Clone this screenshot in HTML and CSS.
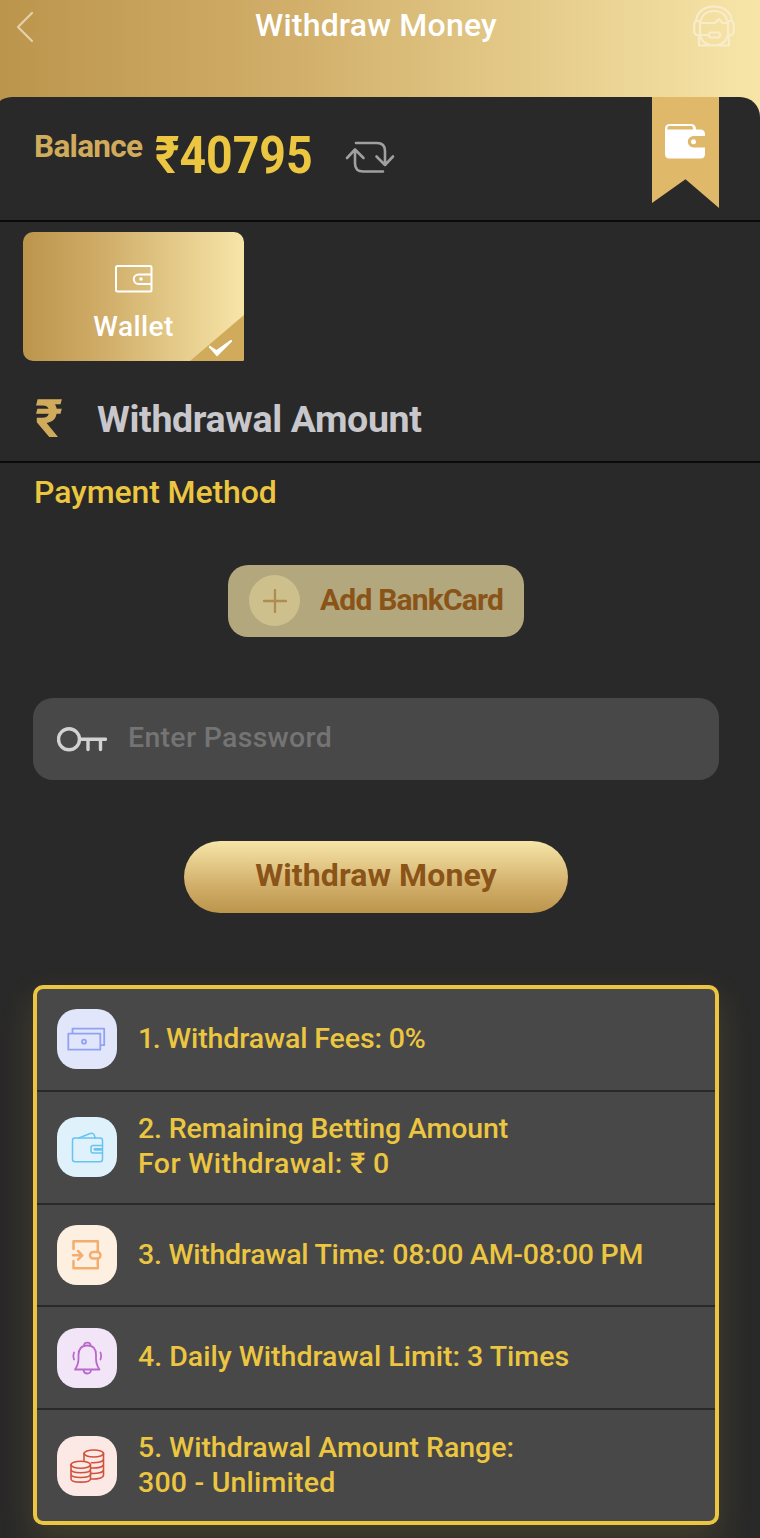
FILE: index.html
```html
<!DOCTYPE html>
<html lang="en">
<head>
<meta charset="utf-8">
<title>Withdraw Money</title>
<link rel="stylesheet" href="styles.css">
</head>
<body>
<header class="topbar">
  <svg class="back" viewBox="0 0 18 32"><path d="M16 2 2 16l14 14"/></svg>
  <h1 class="title">Withdraw Money</h1>
  <svg class="support" viewBox="0 0 42 42"><path d="M3 16C4 7 11 1.500 21 1.500S38 7 39 16M7.500 16C9 10 14 6 21 6s12 4 13.500 10M7 18h15l4-4 3.500 4H35M7 16v14h-2.500C2 30 1.200 28.500 1.200 26v-6C1.200 18 2 16 4 16zM35 16v14h2.500c2.500 0 3.300-1.500 3.300-4v-6c0-2-.8-4-2.800-4zM7 28c0 7 6 12.500 14 12.500S35 35 35 28M6 30v10.500h30V30M7 30h9M18 27.500h7q2 0 2 2v1q0 2-2 2h-7q-2 0-2-2v-1q0-2 2-2z"/></svg>
</header>
<main class="panel">
  <section class="balance">
    <span class="balance-label">Balance</span>
    <span class="balance-value">₹40795</span>
    <svg class="refresh" viewBox="0 0 50 34"><path d="M11 3h21q8 0 8 8v14M31.500 16.500 40 25l8-8.500M38 31.500H18q-8 0-8-8V9.500M2 18l8-8.500 8.500 8.500"/></svg>
    <div class="ribbon">
      <svg viewBox="0 0 40 35"><path fill-rule="evenodd" d="M5 0h21q5 0 5 5.500h4q5 0 5 5V12H28.500a5.700 5.700 0 0 0 0 11.400H40V30q0 4.500-4.500 4.500h-31Q0 34.500 0 30V5Q0 0 5 0zM4.500 2Q2.300 2 2.300 4v1.500h26Q28 2 26 2z"/><circle cx="28.500" cy="17.800" r="2.500"/></svg>
    </div>
  </section>
  <section class="methods">
    <div class="wallet">
      <svg class="wallet-icon" viewBox="0 0 38 28"><rect x="1" y="1" width="35.500" height="25.500" rx="1.500"/><path d="M36 9.500H23.500a4.700 4.700 0 0 0 0 9.400H36"/><circle cx="26" cy="14" r="1.700"/></svg>
      <span>Wallet</span>
      <svg class="wallet-check" viewBox="0 0 54 46"><path class="corner" d="M0 46 54 0v46z"/><path class="tick" d="M20 33.500q-2-1-.5-3l7 4.500L40.500 25q2.500-.5 1.500 1.500L27 41.500z"/></svg>
    </div>
  </section>
  <section class="amount">
    <span class="rupee">₹</span>
    <span class="amount-hint">Withdrawal Amount</span>
  </section>
  <h2 class="heading">Payment Method</h2>
  <button class="add">
    <span class="add-icon"><svg viewBox="0 0 24 24"><path d="M12 1v22M1 12h22"/></svg></span>
    <span class="add-label">Add BankCard</span>
  </button>
  <div class="password">
    <svg viewBox="0 0 50 27"><circle cx="12" cy="13.300" r="10.500"/><path d="M23 13.300h25.500M31 14v9.500M43.500 14v9.500"/></svg>
    <span>Enter Password</span>
  </div>
  <button class="submit">Withdraw Money</button>
  <ul class="rules">
    <li class="rule fees">
      <svg class="rule-icon blue" viewBox="0 0 60 60"><path d="M15.500 24v-4.300h31.700v16.500H44M11.300 24.700h32v16h-32z"/><circle cx="27" cy="32.700" r="2"/></svg>
      <p><span class="number">1.</span> Withdrawal Fees: 0%</p>
    </li>
    <li class="rule betting">
      <svg class="rule-icon sky" viewBox="0 0 60 60"><rect x="15.500" y="21" width="30" height="23.800" rx="2.500"/><path d="m22 21 11-4.500q3-1 4 1l1.300 3.500M45.500 28.500H36q-2 0-2 2V34q0 2 2 2h9.500"/><path class="thick" d="M38 32.300h6"/></svg>
      <p>2. Remaining Betting Amount<br><span class="second">For Withdrawal: ₹ 0</span></p>
    </li>
    <li class="rule time">
      <svg class="rule-icon orange" viewBox="0 0 60 60"><path d="M16.500 24v-7.700h24.300v10.500M40.800 33.500v9.700H16.500V36M16 30.300h9M21 26l4.300 4.300L21 34.600"/><rect x="33" y="27" width="10.500" height="6.500" rx="3.200"/></svg>
      <p>3. Withdrawal Time: 08:00 AM-08:00 PM</p>
    </li>
    <li class="rule limit">
      <svg class="rule-icon purple" viewBox="0 0 60 60"><path d="M27 18q-.5-3.300 3.300-3.300T33.500 18M18 41.500q3.500-5 3.500-11V27q0-9.500 8.800-9.500T39 27v3.500q0 6 3.500 11zM26.500 42q.5 3.500 3.800 3.500t3.700-3.500M17 24.500q-1.500 3.500 0 7M43.500 24.500q1.500 3.500 0 7"/></svg>
      <p>4. Daily Withdrawal Limit: 3 Times</p>
    </li>
    <li class="rule range">
      <svg class="rule-icon red" viewBox="0 0 60 60"><ellipse cx="36.800" cy="17.500" rx="9.700" ry="3.500"/><path d="M27 17.500v7M46.500 17.500v21.500c0 3-6 4.300-12.500 4M46.500 23c0 3-6 4-12 3.700M46.500 28.300c0 3-6 4-12.500 3.700M46.500 33.700c0 3-6 4-12.500 3.700"/><ellipse cx="23.700" cy="28.700" rx="9.700" ry="3.500"/><path d="M14 28.700v14c0 4.600 19.500 4.600 19.500 0v-14M14 33.300c0 4.600 19.500 4.600 19.500 0M14 38c0 4.600 19.500 4.600 19.500 0"/></svg>
      <p>5. Withdrawal Amount Range:<br><span class="second">300 - Unlimited</span></p>
    </li>
  </ul>
</main>
</body>
</html>
```
FILE: styles.css
```css
* { box-sizing: border-box; }
body {
  margin: 0;
  height: 1538px;
  overflow: hidden;
  background: linear-gradient(90deg, #bc954c, #cfac67 35%, #f7e5a8) #292929;
  font-family: Roboto, "Liberation Sans", sans-serif;
  font-weight: 500;
  color: #ecc640;
}
svg { display: block; fill: none; stroke-linecap: round; stroke-linejoin: round; }
h1, h2, p, ul { margin: 0; padding: 0; font-weight: 500; }
button { border: 0; padding: 0; font: inherit; color: #8a5419; font-weight: 700; }

.topbar { display: flex; height: 97px; padding: 0 25px 0 16px; justify-content: space-between; align-items: flex-start; }
.back { width: 18px; height: 32px; margin-top: 11px; stroke: #e5d0ab; stroke-width: 2.2; }
.title { margin-left: 25px; color: #fff; font-size: 32px; line-height: 50px; letter-spacing: .2px; }
.support { width: 42px; height: 42px; margin-top: 5px; stroke: #f9ecca; stroke-width: 2.2; }

.panel { margin-left: -8px; height: 1441px; background: #292929; border-radius: 20px 20px 0 0; }
.balance { display: flex; height: 125px; padding: 0 41px 0 42px; border-bottom: 2px solid #0a0a0a; }
.balance-label { color: #d1ab5c; font-weight: 700; font-size: 31.5px; line-height: 99px; letter-spacing: -.7px; }
.balance-value { margin-left: 13px; font-weight: 700; font-size: 52px; line-height: 117px; transform: scaleX(.893); transform-origin: 0 0; }
.refresh { width: 50px; height: 34px; margin: 43px 0 0 13px; stroke: #a0a0a0; stroke-width: 2.6; }
.ribbon { width: 67px; height: 111px; margin-left: auto; padding: 27px 0 0 13px; background: #dfb969; clip-path: polygon(0 0, 100% 0, 100% 100%, 50% 74%, 0 95.5%); }
.ribbon svg { width: 40px; height: 35px; fill: #fff; }

.methods { height: 153px; padding: 10px 0 0 31px; }
.wallet { position: relative; display: flex; flex-direction: column; align-items: center; width: 221px; height: 129px; padding-top: 33px; border-radius: 10px 10px 2px 10px; background: linear-gradient(90deg, #bc954c, #cfac67 35%, #f7e5a8); color: #fff; font-size: 28px; line-height: 34px; letter-spacing: .4px; overflow: hidden; }
.wallet-icon { width: 38px; height: 28px; margin-bottom: 17px; stroke: #fff; stroke-width: 2; }
.wallet-icon circle { fill: #fff; stroke: none; }
.wallet-check { position: absolute; right: 0; bottom: 0; width: 54px; height: 46px; }
.corner { fill: #d1ab5c; }
.tick { fill: #fff; }

.amount { display: flex; height: 88px; padding-left: 43px; border-bottom: 2px solid #0a0a0a; }
.rupee { width: 62px; color: #d1ab5c; font-weight: 700; font-size: 53px; line-height: 88px; }
.amount-hint { color: #c8c8cc; font-weight: 700; font-size: 37.5px; line-height: 89px; letter-spacing: -.35px; }
.heading { height: 102px; padding-left: 42px; font-size: 32px; line-height: 58px; letter-spacing: -.1px; }

.add { display: flex; align-items: center; width: 296px; height: 72px; margin: 0 auto; padding: 0 0 1px 21px; gap: 20px; border-radius: 20px; background: #b3a77d; font-size: 30px; letter-spacing: -.8px; white-space: nowrap; }
.add-label { padding-bottom: 2px; }
.add-icon { display: flex; align-items: center; justify-content: center; width: 51px; height: 51px; border-radius: 50%; background: #cdc08c; }
.add-icon svg { width: 24px; height: 24px; stroke: #b08b53; stroke-width: 2.3; }

.password { display: flex; align-items: center; width: 686px; height: 82px; margin: 61px auto; padding-left: 24px; border-radius: 20px; background: #484848; color: #747474; font-size: 28.5px; letter-spacing: .3px; line-height: 33px; }
.password svg { width: 50px; height: 27px; margin-right: 21px; stroke: #d2d2d2; stroke-width: 3.4; }
.password span { padding-bottom: 3px; }

.submit { display: block; width: 384px; height: 72px; margin: 0 auto 72px; padding-bottom: 4px; border-radius: 36px; background: linear-gradient(#f7e5a8, #cfac67 65%, #bc954c); font-size: 32px; letter-spacing: .1px; }

.rules { width: 686px; height: 540px; margin: 0 auto; border: 4px solid #ecc640; border-radius: 10px; background: #484848; box-shadow: 0 14px 34px rgba(236, 198, 64, .15); list-style: none; }
.rule { display: flex; align-items: center; height: 103px; padding-left: 20px; gap: 21px; border-bottom: 2px solid #292929; font-size: 28.5px; line-height: 35px; }
.rule p { padding-bottom: 2px; white-space: nowrap; }
.number { letter-spacing: -1.5px; }
.fees { letter-spacing: -.12px; }
.betting { height: 113px; padding-bottom: 2px; letter-spacing: -.13px; }
.betting .second { letter-spacing: .4px; }
.time { height: 102px; letter-spacing: -.26px; }
.limit { letter-spacing: 0; }
.range { height: 111px; border: 0; letter-spacing: -.03px; }
.range .second { letter-spacing: .2px; }
.rule-icon { width: 60px; height: 60px; border-radius: 20px; stroke-width: 1.8; flex: none; }
.fees .rule-icon { margin-bottom: 2px; }
.blue { background: #e1e6fa; stroke: #91a2f5; }
.sky { background: #dff1fb; stroke: #67c4f0; stroke-width: 1.5; }
.thick { stroke-width: 2.8; }
.orange { background: #fdf0e1; stroke: #f3ad6e; stroke-width: 2.5; }
.purple { background: #f2e5f7; stroke: #b969cc; }
.red { background: #fce8e5; stroke: #d0523c; stroke-width: 1.6; }
```
